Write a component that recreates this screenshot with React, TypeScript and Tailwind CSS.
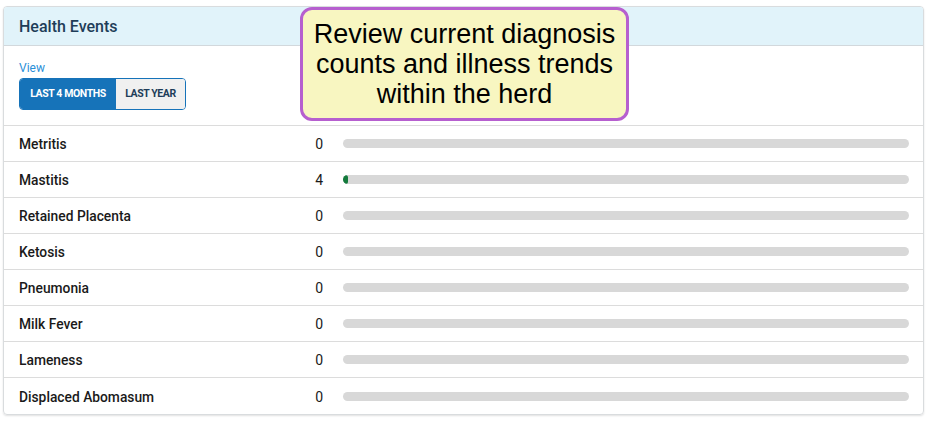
import React from "react"

const events = [
  { name: "Metritis", count: 0 },
  { name: "Mastitis", count: 4 },
  { name: "Retained Placenta", count: 0 },
  { name: "Ketosis", count: 0 },
  { name: "Pneumonia", count: 0 },
  { name: "Milk Fever", count: 0 },
  { name: "Lameness", count: 0 },
  { name: "Displaced Abomasum", count: 0 },
]

export default function App() {
  return (
    <div className="relative w-[929px] h-[423px] bg-white font-['Roboto',sans-serif]">
      <div className="pt-[6px] pl-[3px] w-[924px]">
        <div className="border border-[#d9dcde] rounded-[4px] shadow-[0_1px_2px_rgba(0,0,0,0.12)] overflow-hidden">
          {/* header */}
          <div className="h-[39px] bg-[#e1f3fa] border-b border-[#d2d8dc] flex items-center pl-[15px] pt-[2px]">
            <h2 className="text-[16px] font-medium text-[#1e3d59]">Health Events</h2>
          </div>

          {/* filter */}
          <div className="pl-[15px] pt-[14px] pb-[15px] border-b border-[#dcdcdc]">
            <div className="text-[12px] leading-[16px] text-[#2a8fd8]">View</div>
            <div className="mt-[2px] flex w-[167px] h-[32px] rounded-[4px] border border-[#1673b9] overflow-hidden">
              <button className="w-[96px] bg-[#1673b9] text-white text-[10.5px] font-bold tracking-[-0.4px]">
                LAST 4 MONTHS
              </button>
              <button className="flex-1 bg-[#f0f0f0] text-[#1e3d59] text-[10.5px] font-bold tracking-[-0.4px]">
                LAST YEAR
              </button>
            </div>
          </div>

          {/* rows */}
          {events.map((e, i) => (
            <div
              key={e.name}
              className={`h-[36px] flex items-center pl-[15px] pr-[14px] ${
                i < events.length - 1 ? "border-b border-[#dcdcdc]" : ""
              }`}
            >
              <span className="w-[287px] pt-[2px] text-[13.8px] font-medium text-[#1a1a1a]">{e.name}</span>
              <span className="w-[17px] pt-[2px] text-right text-[14px] text-[#1a1a1a]">{e.count}</span>
              <div className="ml-[20px] flex-1 h-[9px] rounded-full bg-[#d8d8d8] overflow-hidden">
                {e.count > 0 && (
                  <div className="h-full rounded-full bg-[#137a3c]" style={{ width: `${e.count * 1.2}px` }} />
                )}
              </div>
            </div>
          ))}
        </div>
      </div>

      {/* callout */}
      <div className="absolute left-[300px] top-[7px] w-[329px] h-[114px] rounded-[12px] border-[3px] border-[#b65fcf] bg-[#f8f6c1] flex items-center justify-center">
        <p className="text-center text-[27px] leading-[30px] text-black font-['Liberation_Sans',Arial,sans-serif]">
          Review current diagnosis
          <br />
          counts and illness trends
          <br />
          within the herd
        </p>
      </div>
    </div>
  )
}
